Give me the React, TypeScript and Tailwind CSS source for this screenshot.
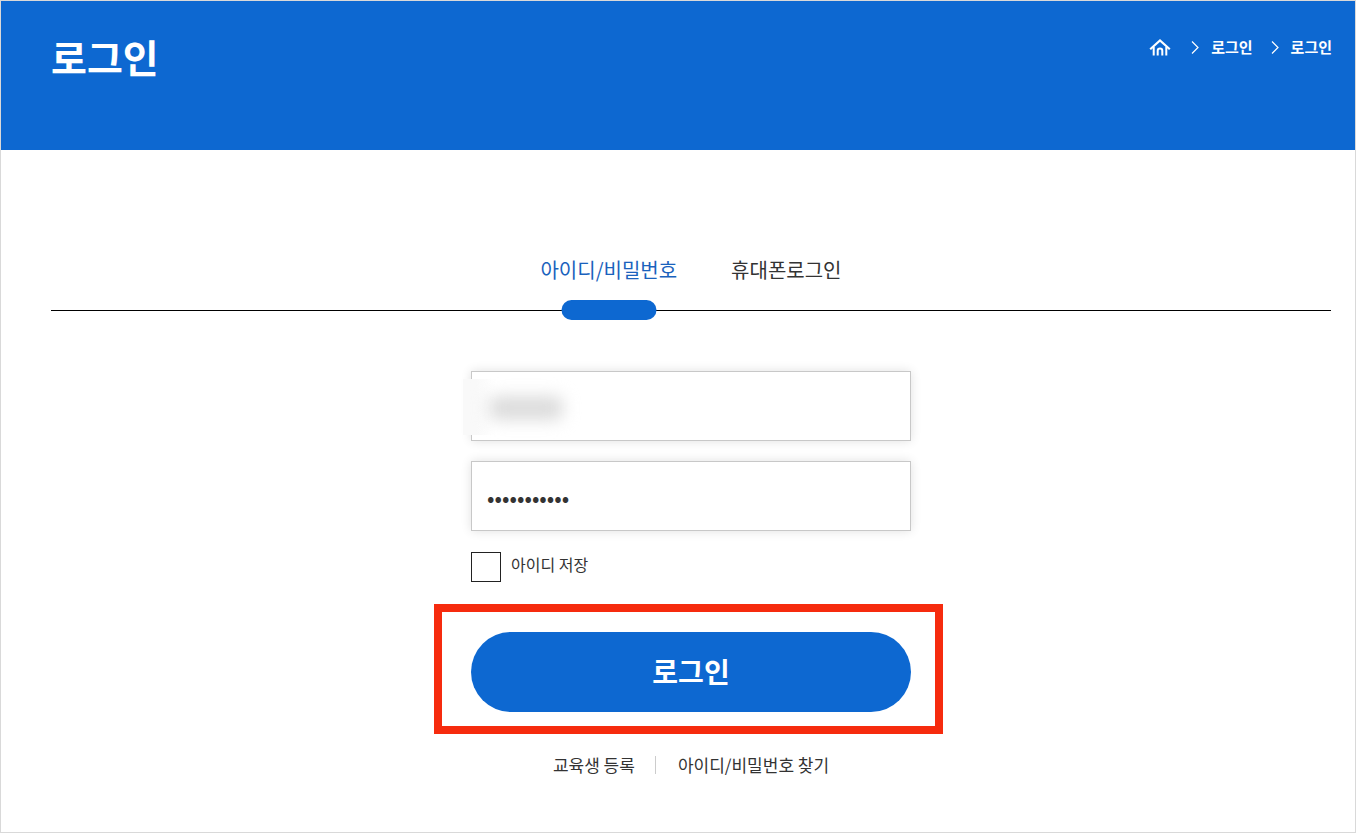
import { useState } from 'react';

const tabs = [
  { id: 'account', label: '아이디/비밀번호' },
  { id: 'phone', label: '휴대폰로그인' },
];

function HomeIcon() {
  return (
    <svg width="22" height="18" viewBox="0 0 22 18" fill="none" stroke="currentColor" strokeWidth="2">
      <path d="M1.2 11.3 11 2.4l9.8 8.9" strokeWidth="2.2" />
      <path d="M4.7 9v8.5M17.3 9v8.5" />
      <path d="M8.7 17.5v-4.7a2.3 2.3 0 0 1 4.6 0v4.7" />
    </svg>
  );
}

function Chevron() {
  return (
    <svg width="8" height="14" viewBox="0 0 8 14" fill="none" stroke="currentColor" strokeWidth="1.2">
      <path d="m1 1.5 6 6-6 6" />
    </svg>
  );
}

function PageHeader() {
  return (
    <header className="flex h-[149px] items-start justify-between bg-[#0d68d1] pr-[23px] pl-[50px] text-white">
      <h1 className="pt-6 text-[39px] leading-[62px] font-bold">로그인</h1>
      <nav aria-label="breadcrumb" className="flex items-center pt-[34px] text-[15px] leading-6 font-bold">
        <a href="#" aria-label="홈" className="mr-5">
          <HomeIcon />
        </a>
        <Chevron />
        <a href="#" className="mr-[18px] ml-3">로그인</a>
        <Chevron />
        <a href="#" className="ml-3">로그인</a>
      </nav>
    </header>
  );
}

export default function App() {
  const [active, setActive] = useState('account');
  const [saveId, setSaveId] = useState(false);

  return (
    <div className="min-h-screen border border-[#d9d9d9] bg-white font-['Noto_Sans_CJK_KR',sans-serif] text-[#333]">
      <PageHeader />

      <main className="pt-[100px] pr-6 pb-12 pl-[50px]">
        {/* Login method tabs */}
        <div className="flex h-[61px] justify-center gap-[54px] border-b border-black" role="tablist">
          {tabs.map((tab) => (
            <button
              key={tab.id}
              role="tab"
              aria-selected={active === tab.id}
              onClick={() => setActive(tab.id)}
              className={`relative h-10 text-[20px] leading-10 ${active === tab.id ? 'text-[#1a62bd]' : ''}`}
            >
              {tab.label}
              {active === tab.id && (
                <span className="absolute top-[50px] left-1/2 h-5 w-[95px] -translate-x-1/2 rounded-full bg-[#0d68d1]" />
              )}
            </button>
          ))}
        </div>

        <form className="mx-auto mt-[60px] w-full max-w-[440px]" onSubmit={(e) => e.preventDefault()}>
          <div className="relative">
            <input
              type="text"
              aria-label="아이디"
              className="block h-[70px] w-full border border-[#c8c8c8] px-4 text-base shadow-[0_0_10px_rgba(0,0,0,0.12)] outline-none"
            />
            {/* Masked user id */}
            <span className="pointer-events-none absolute top-2 -left-2 h-14 w-8 bg-linear-to-r from-[#f9f9f9] from-40% to-white" />
            <span className="pointer-events-none absolute top-[25px] left-[18px] h-6 w-[74px] rounded-lg bg-[#dcdcdc] blur-[8px]" />
          </div>

          <input
            type="password"
            aria-label="비밀번호"
            defaultValue="password123"
            className="mt-5 block h-[70px] w-full border border-[#c8c8c8] px-[15px] text-[22px] shadow-[0_0_10px_rgba(0,0,0,0.12)] outline-none"
          />

          <div className="mt-[21px] flex">
            <input
              id="save-id"
              type="checkbox"
              checked={saveId}
              onChange={(e) => setSaveId(e.target.checked)}
              className="size-[30px] appearance-none border border-[#222] bg-white checked:bg-[#0d68d1]"
            />
            <label htmlFor="save-id" className="pl-[10px] text-[16px] leading-6">아이디 저장</label>
          </div>

          <div className="relative mt-[50px]">
            <span className="pointer-events-none absolute -top-7 -right-8 -bottom-[22px] -left-[37px] border-8 border-[#f62b0e]" />
            <button type="submit" className="block h-20 w-full rounded-full bg-[#0d68d1] pb-[2px] text-[28px] font-bold text-white">
              로그인
            </button>
          </div>

          <div className="mt-[39px] flex items-center justify-center text-[17px] leading-7">
            <a href="#">교육생 등록</a>
            <span className="mr-[22px] ml-5 h-[18px] w-px bg-[#ccc]" />
            <a href="#">아이디/비밀번호 찾기</a>
          </div>
        </form>
      </main>
    </div>
  );
}
